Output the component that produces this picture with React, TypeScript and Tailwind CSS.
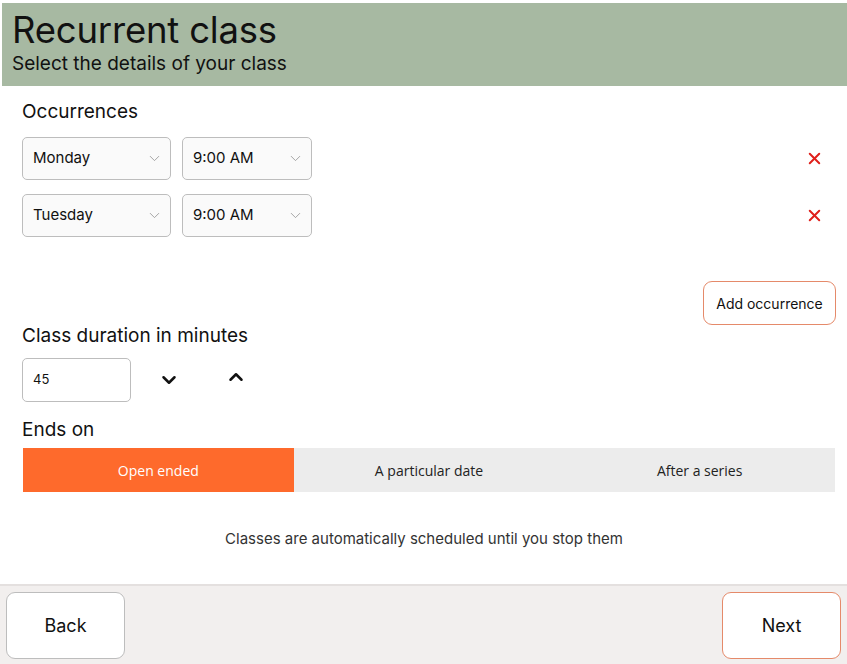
import { ChevronDown, ChevronUp, X } from "lucide-react";

const font = { fontFamily: "Inter, 'Noto Sans', sans-serif" };

function Select({ value, width }: { value: string; width: string }) {
  return (
    <div
      className={`${width} h-[43px] flex items-center justify-between pl-[10px] pr-[7px] rounded-[5px] border border-[#bdbdbd] bg-[#fafafa] text-[15px] text-[#111]`}
    >
      <span>{value}</span>
      <ChevronDown className="w-[17px] h-[17px] text-[#9a9a9a]" strokeWidth={1.25} />
    </div>
  );
}

function OccurrenceRow({ day }: { day: string }) {
  return (
    <div className="flex items-center">
      <Select value={day} width="w-[149px]" />
      <div className="ml-[11px]">
        <Select value="9:00 AM" width="w-[130px]" />
      </div>
      <button className="ml-auto mr-[12px] text-[#e0201b]">
        <X className="w-[19px] h-[19px]" strokeWidth={2.5} />
      </button>
    </div>
  );
}

export default function App() {
  return (
    <div className="w-[847px] h-[664px] flex flex-col bg-white overflow-hidden" style={font}>
      {/* Header */}
      <div className="mt-[3px] ml-[2px] h-[83px] bg-[#a7b9a2] px-[10px] pt-[7px]">
        <h1 className="text-[36.5px] leading-[40px] text-[#111] tracking-[-0.2px]">Recurrent class</h1>
        <p className="text-[19px] leading-[24px] text-[#111] mt-[2px]">Select the details of your class</p>
      </div>

      {/* Body */}
      <div className="flex-1 pl-[22px] pr-[11px] pt-[14px]">
        <h2 className="text-[19px] leading-[24px] text-[#111]">Occurrences</h2>
        <div className="mt-[13px] flex flex-col gap-[14px]">
          <OccurrenceRow day="Monday" />
          <OccurrenceRow day="Tuesday" />
        </div>

        <div className="flex justify-end mt-[44px]">
          <button className="w-[133px] h-[44px] rounded-[9px] border border-[#e58a6a] bg-white text-[14px] text-[#111]">
            Add occurrence
          </button>
        </div>

        <h2 className="text-[19px] leading-[24px] text-[#111] -mt-[1px]">Class duration in minutes</h2>
        <div className="mt-[10px] flex items-center">
          <div className="w-[109px] h-[44px] rounded-[5px] border border-[#bdbdbd] flex items-center pl-[10px] text-[13px] text-[#111]">
            45
          </div>
          <button className="ml-[27px] text-[#111]">
            <ChevronDown className="w-[22px] h-[22px]" strokeWidth={2.75} />
          </button>
          <button className="ml-[45px] -mt-[6px] text-[#111]">
            <ChevronUp className="w-[22px] h-[22px]" strokeWidth={2.75} />
          </button>
        </div>

        <h2 className="text-[19px] leading-[24px] text-[#111] mt-[16px]">Ends on</h2>
        <div
          className="mt-[6px] ml-[1px] w-[812px] h-[44px] grid grid-cols-3 bg-[#ececec] text-[14px]"
          style={{ fontFamily: "'Open Sans', 'Noto Sans', sans-serif" }}
        >
          <div className="bg-[#fe6a2c] text-white flex items-center justify-center">Open ended</div>
          <div className="flex items-center justify-center text-[#222]">A particular date</div>
          <div className="flex items-center justify-center text-[#222]">After a series</div>
        </div>

        <p className="mt-[36px] text-center text-[15px] text-[#333] pr-[10px]">
          Classes are automatically scheduled until you stop them
        </p>
      </div>

      {/* Footer */}
      <div className="h-[80px] border-t-2 border-[#e4e0df] bg-[#f2efee] flex items-start justify-between px-[6px] pt-[6px]">
        <button className="w-[119px] h-[67px] rounded-[9px] border border-[#bdbdbd] bg-white text-[18px] text-[#111]">
          Back
        </button>
        <button className="w-[119px] h-[67px] rounded-[9px] border border-[#e58a6a] bg-white text-[18px] text-[#111]">
          Next
        </button>
      </div>
    </div>
  );
}
